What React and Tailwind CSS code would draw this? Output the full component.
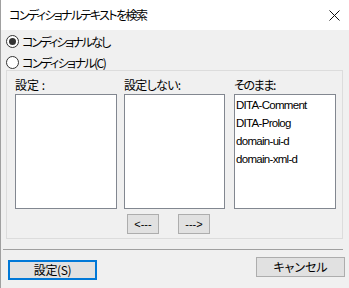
export default function App() {
  const jp = "font-['Noto_Sans_CJK_JP','Noto_Sans',sans-serif] [font-feature-settings:'palt']";
  const latin = "font-['Liberation_Sans',sans-serif] [font-feature-settings:normal]";
  return (
    <div className={`w-[349px] h-[288px] bg-[#f0f0f0] border-l border-[#a0a0a0] flex flex-col text-[12px] leading-none text-black ${jp}`}>
      {/* title bar */}
      <div className="h-[30px] bg-white flex items-center justify-between pl-[8px] pr-[9px] shrink-0">
        <span className="tracking-[-1.6px]">コンディショナルテキストを検索</span>
        <svg width="11" height="11" viewBox="0 0 11 11">
          <path d="M0.5 0.5 L10.5 10.5 M10.5 0.5 L0.5 10.5" stroke="#111" strokeWidth="1" />
        </svg>
      </div>
      {/* radios */}
      <div className="flex flex-col pl-[5px] pt-[5px] gap-[8px]">
        <div className="flex items-center h-[13px]">
          <span className="w-[13px] h-[13px] rounded-full border border-[#333] flex items-center justify-center bg-white">
            <span className="w-[7px] h-[7px] rounded-full bg-[#333]" />
          </span>
          <span className="ml-[3px] tracking-[-1.9px]">コンディショナルなし</span>
        </div>
        <div className="flex items-center h-[13px]">
          <span className="w-[13px] h-[13px] rounded-full border border-[#333] bg-white" />
          <span className="ml-[3px] tracking-[-1.55px]">コンディショナル(C)</span>
        </div>
      </div>
      {/* group box */}
      <div className="ml-[5px] mt-[1px] w-[337px] h-[169px] border border-[#dcdcdc] flex flex-col pl-[8px]">
        <div className="flex">
          <div className="flex flex-col w-[102px]">
            <span className="h-[23px] pt-[8px]">設定 :</span>
            <div className="h-[115px] bg-white border border-[#828790]" />
          </div>
          <div className="flex flex-col w-[101px] ml-[7px]">
            <span className="h-[23px] pt-[8px] tracking-[-0.7px]">設定しない:</span>
            <div className="h-[115px] bg-white border border-[#828790]" />
          </div>
          <div className="flex flex-col w-[102px] ml-[9px]">
            <span className="h-[23px] pt-[8px] tracking-[-1.4px]">そのまま:</span>
            <div className={`h-[115px] bg-white border border-[#828790] pt-[2px] pl-[1px] text-[11.5px] tracking-[-0.7px] ${latin}`}>
              <div className="h-[18px] flex items-center">DITA-Comment</div>
              <div className="h-[18px] flex items-center">DITA-Prolog</div>
              <div className="h-[18px] flex items-center">domain-ui-d</div>
              <div className="h-[18px] flex items-center">domain-xml-d</div>
            </div>
          </div>
        </div>
        <div className="flex mt-[5px] ml-[112px] gap-[19px]">
          <div className={`w-[32px] h-[20px] bg-[#e1e1e1] border border-[#adadad] flex items-center justify-center text-[11px] ${latin}`}>&lt;---</div>
          <div className={`w-[32px] h-[20px] bg-[#e1e1e1] border border-[#adadad] flex items-center justify-center text-[11px] ${latin}`}>---&gt;</div>
        </div>
      </div>
      {/* separator */}
      <div className="ml-[2px] mt-[10px] w-[340px] h-px bg-[#a0a0a0]" />
      {/* buttons */}
      <div className="flex justify-between items-start pl-[7px] pr-[4px] mt-[7px]">
        <div className="mt-[3px] w-[89px] h-[20px] bg-[#e1e1e1] border-2 border-[#0078d7] flex items-center justify-center tracking-[-0.4px]">設定(S)</div>
        <div className="w-[89px] h-[20px] bg-[#e1e1e1] border border-[#adadad] flex items-center justify-center">キャンセル</div>
      </div>
    </div>
  );
}
